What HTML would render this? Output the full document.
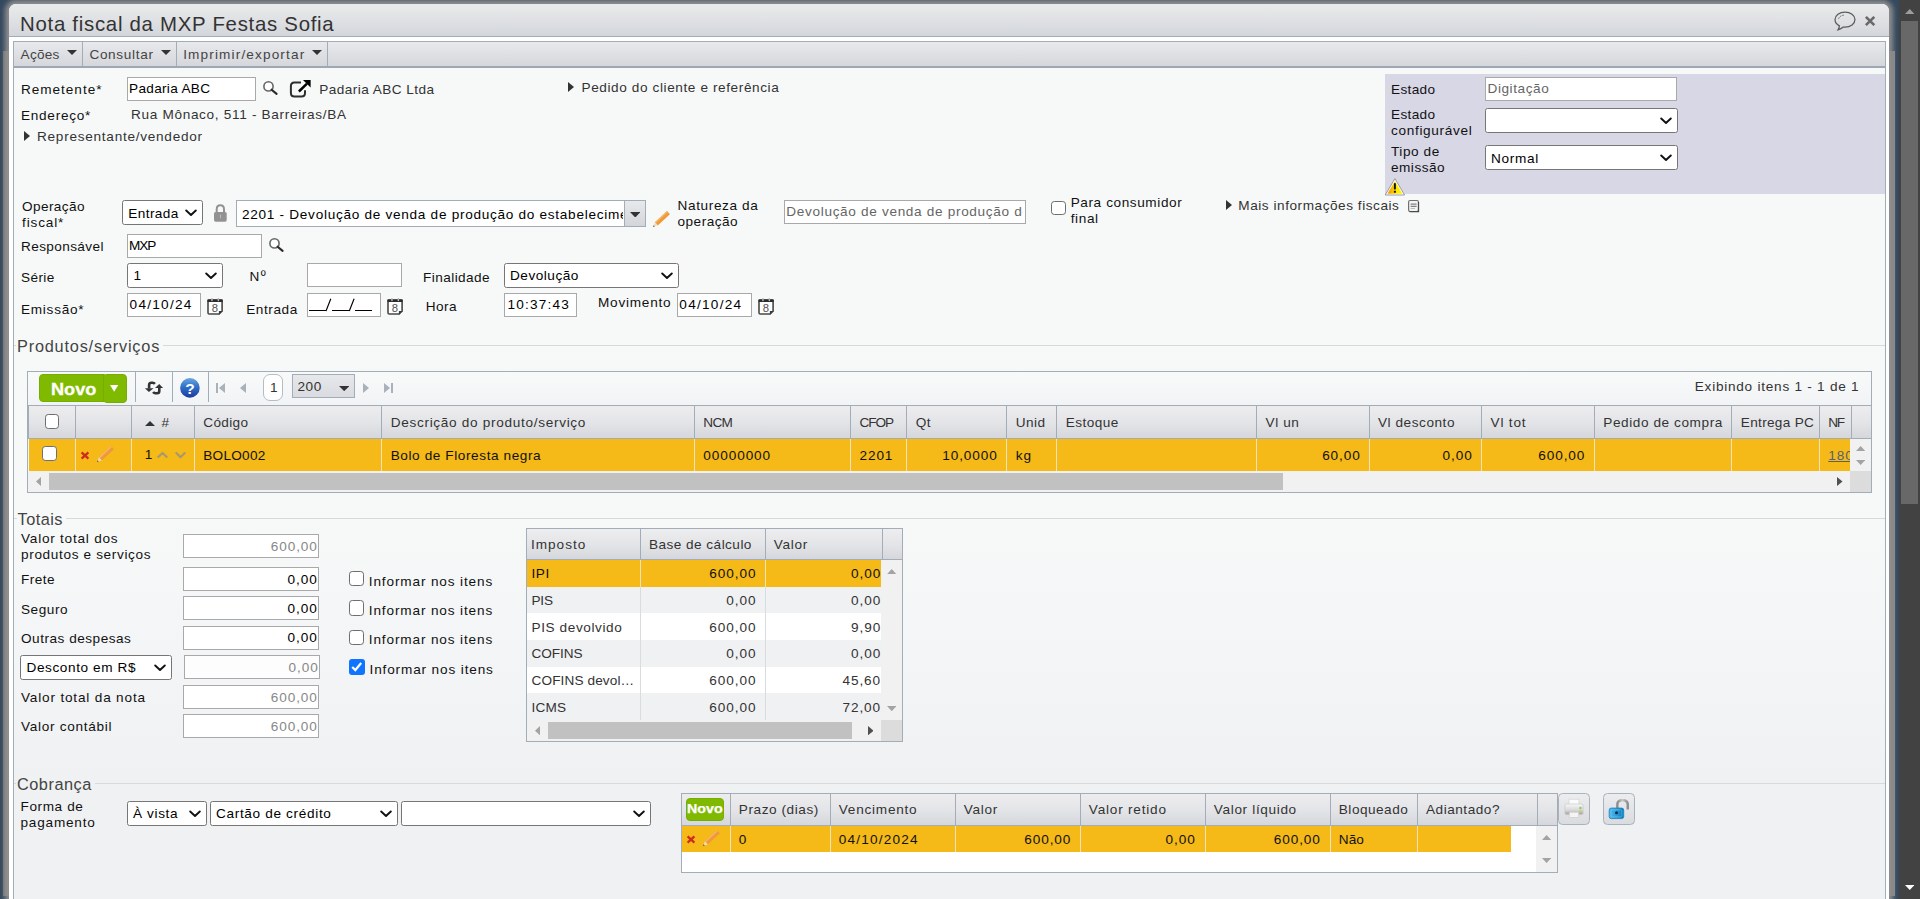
<!DOCTYPE html>
<html lang="pt-BR"><head><meta charset="utf-8"><title>Nota fiscal</title>
<style>
html,body{margin:0;padding:0;}
body{width:1920px;height:899px;overflow:hidden;position:relative;background:#34495e;font-family:"Liberation Sans",sans-serif;font-size:13.333px;color:#111;}
div,span,svg{position:absolute;box-sizing:border-box;}
.t{white-space:pre;line-height:16px;}
.sel{background:#fff;border:1px solid #767676;border-radius:2.5px;}

</style></head>
<body>
<div style="left:3px;top:51px;width:7px;height:845px;background:linear-gradient(90deg,#6e6e6e,#8c8c8c 60%,#9a9a9a);"></div>
<div style="left:1888px;top:51px;width:7px;height:845px;background:linear-gradient(90deg,#9a9a9a,#7c7c7c 45%,#8a8a8a);"></div>
<div style="left:9px;top:4px;width:1880px;height:900px;background:#fff;border-radius:7px 7px 0 0;box-shadow:0 0 5px 4px #8f8f8f;"></div>
<div style="left:9px;top:4px;width:1880px;height:33px;border-radius:7px 7px 0 0;background:linear-gradient(#e9eaec,#dfe1e4 50%,#d3d6db);border-bottom:1px solid #a3adb8;"></div>
<span class="t" style="top:12px;font-size:20.4px;line-height:24px;color:#333;letter-spacing:0.722px;left:20.00px;">Nota fiscal da MXP Festas Sofia</span>
<svg style="left:1834px;top:11px;" width="23" height="21" viewBox="0 0 23 21"><path d="M11 1.1 C5.5 1.1 1 4.5 1 8.6 C1 11.2 2.7 13.5 5.4 14.9 C5.3 16.3 4.8 17.6 4 18.8 C6.3 18.2 8 17.2 9.3 16 C9.9 16.1 10.4 16.1 11 16.1 C16.5 16.1 21 12.7 21 8.6 C21 4.5 16.5 1.1 11 1.1 Z" fill="none" stroke="#5c5c5c" stroke-width="1.25"/><path d="M4.5 7.8 C5.2 5.6 7.5 4.2 10.4 4" fill="none" stroke="#666" stroke-width="0.9" stroke-dasharray="1.7 0.9"/></svg>
<svg style="left:1864px;top:15px;" width="13" height="13" viewBox="0 0 13 13"><path d="M1.9 1.9 L10.3 10.1 M10.3 1.9 L1.9 10.1" stroke="#696969" stroke-width="2.7" stroke-linecap="butt"/></svg>
<div style="left:13px;top:41px;width:1873px;height:27px;background:linear-gradient(#e8e9ec,#dee0e3 50%,#d5d7dc);border:1px solid #a3adb8;border-bottom:2px solid #9ea8b3;"></div>
<div style="left:82px;top:42px;width:1px;height:24px;background:#a3adb8;"></div>
<div style="left:176px;top:42px;width:1px;height:24px;background:#a3adb8;"></div>
<div style="left:327px;top:42px;width:1px;height:24px;background:#a3adb8;"></div>
<span class="t" style="top:47px;font-size:13.6px;color:#444;letter-spacing:0.255px;left:20.60px;">Ações</span>
<svg style="left:67px;top:50px;" width="10" height="5" viewBox="0 0 10 5"><path d="M0 0 L10 0 L5.0 5 Z" fill="#333"/></svg>
<span class="t" style="top:47px;font-size:13.6px;color:#444;letter-spacing:0.677px;left:89.40px;">Consultar</span>
<svg style="left:161px;top:50px;" width="10" height="5" viewBox="0 0 10 5"><path d="M0 0 L10 0 L5.0 5 Z" fill="#333"/></svg>
<span class="t" style="top:47px;font-size:13.6px;color:#444;letter-spacing:1.142px;left:183.20px;">Imprimir/exportar</span>
<svg style="left:312px;top:50px;" width="10" height="5" viewBox="0 0 10 5"><path d="M0 0 L10 0 L5.0 5 Z" fill="#333"/></svg>
<div style="left:13px;top:68px;width:1873px;height:840px;background:linear-gradient(#f7f9f9 0,#f7f9f9 450px,#f0f1f3 710px,#f0f1f3 100%);border-left:1px solid #a3adb8;border-right:1px solid #a3adb8;"></div>
<div style="left:1899px;top:0px;width:21px;height:899px;background:#424242;"></div>
<div style="left:1901px;top:21px;width:17px;height:483px;background:#686868;"></div>
<svg style="left:1904.5px;top:9px;" width="9.5" height="5" viewBox="0 0 9.5 5"><path d="M0 5 L9.5 5 L4.75 0 Z" fill="#9d9d9d"/></svg>
<svg style="left:1904.5px;top:885px;" width="9.5" height="5" viewBox="0 0 9.5 5"><path d="M0 0 L9.5 0 L4.75 5 Z" fill="#fff"/></svg>
<span class="t" style="top:82px;font-size:13.6px;letter-spacing:0.962px;left:21.00px;">Remetente*</span>
<div style="left:127px;top:77px;width:129px;height:24px;background:#fff;border:1px solid #a9a9a9;"></div>
<span class="t" style="top:81px;font-size:13.6px;color:#000;letter-spacing:0.315px;left:129.00px;">Padaria ABC</span>
<svg style="left:262px;top:80px;" width="17" height="16" viewBox="0 0 17 16"><circle cx="6.5" cy="6.4" r="4.6" fill="#fff" stroke="#666" stroke-width="1.6"/><path d="M9.6 9.7 L14.6 13.9" stroke="#2a2a2a" stroke-width="2.1" stroke-linecap="round"/></svg>
<svg style="left:289px;top:79px;" width="23" height="20" viewBox="0 0 23 20"><path d="M12 3.4 L5.4 3.4 Q1.9 3.4 1.9 6.9 L1.9 14.1 Q1.9 17.6 5.4 17.6 L12.5 17.6 Q16 17.6 16 14.1 L16 11.2" fill="none" stroke="#2e2e2e" stroke-width="2"/><path d="M9.9 12.5 L18 4.6" stroke="#000" stroke-width="2.5"/><path d="M14 1.1 L21.6 1.1 L21.6 8.5 Z" fill="#000"/></svg>
<span class="t" style="top:82px;font-size:13.6px;color:#333;letter-spacing:0.441px;left:319.30px;">Padaria ABC Ltda</span>
<span class="t" style="top:108px;font-size:13.6px;letter-spacing:0.724px;left:21.00px;">Endereço*</span>
<span class="t" style="top:107px;font-size:13.6px;color:#333;letter-spacing:0.675px;left:131.00px;">Rua Mônaco, 511 - Barreiras/BA</span>
<svg style="left:24px;top:131px;" width="6" height="10" viewBox="0 0 6 10"><path d="M0 0 L6 5.0 L0 10 Z" fill="#333"/></svg>
<span class="t" style="top:129px;font-size:13.6px;color:#333;letter-spacing:0.735px;left:37.00px;">Representante/vendedor</span>
<svg style="left:568px;top:82px;" width="6" height="10" viewBox="0 0 6 10"><path d="M0 0 L6 5.0 L0 10 Z" fill="#333"/></svg>
<span class="t" style="top:80px;font-size:13.6px;color:#333;letter-spacing:0.601px;left:581.50px;">Pedido do cliente e referência</span>
<div style="left:1385px;top:74px;width:500px;height:120px;background:#d8d7e6;"></div>
<span class="t" style="top:82px;font-size:13.6px;letter-spacing:0.342px;left:1391.00px;">Estado</span>
<div style="left:1485px;top:77px;width:192px;height:24px;background:#fff;border:1px solid #a9a9a9;"></div>
<span class="t" style="top:81px;font-size:13.6px;color:#666;letter-spacing:0.567px;left:1487.50px;">Digitação</span>
<span class="t" style="top:107px;font-size:13.6px;letter-spacing:0.342px;left:1391.00px;">Estado</span>
<span class="t" style="top:123px;font-size:13.6px;letter-spacing:0.678px;left:1391.00px;">configurável</span>
<div class="sel" style="left:1485px;top:108px;width:193px;height:25px;"></div>
<svg style="left:1660px;top:117.0px;" width="12" height="8" viewBox="0 0 12 8"><path d="M1.2 1.5 L6 6 L10.8 1.5" fill="none" stroke="#111" stroke-width="1.9" stroke-linecap="round" stroke-linejoin="round"/></svg>
<span class="t" style="top:144px;font-size:13.6px;letter-spacing:0.561px;left:1391.00px;">Tipo de</span>
<span class="t" style="top:160px;font-size:13.6px;letter-spacing:0.491px;left:1391.00px;">emissão</span>
<div class="sel" style="left:1485px;top:145px;width:193px;height:25px;"></div>
<svg style="left:1660px;top:154.0px;" width="12" height="8" viewBox="0 0 12 8"><path d="M1.2 1.5 L6 6 L10.8 1.5" fill="none" stroke="#111" stroke-width="1.9" stroke-linecap="round" stroke-linejoin="round"/></svg>
<span class="t" style="top:151px;font-size:13.6px;color:#000;letter-spacing:0.717px;left:1491.00px;">Normal</span>
<svg style="left:1384px;top:177px;" width="22" height="20" viewBox="0 0 22 20"><defs><linearGradient id="wg" x1="0" x2="1" y1="0" y2="0"><stop offset="0.15" stop-color="#f0a400"/><stop offset="0.6" stop-color="#ffe600"/><stop offset="0.9" stop-color="#fff200"/></linearGradient></defs><path d="M10.9 1.6 L20.6 18 L1.2 18 Z" fill="#fff" stroke="#9a9a9a" stroke-width="1" stroke-linejoin="round"/><path d="M10.9 4.2 L18.4 16.8 L3.4 16.8 Z" fill="url(#wg)"/><path d="M10.9 6.2 L10.9 12.4" stroke="#111" stroke-width="1.9"/><rect x="9.9" y="13.8" width="2" height="1.9" fill="#111"/></svg>
<span class="t" style="top:199px;font-size:13.6px;letter-spacing:0.400px;left:22.00px;">Operação</span>
<span class="t" style="top:215px;font-size:13.6px;letter-spacing:0.853px;left:22.00px;">fiscal*</span>
<div class="sel" style="left:122px;top:200px;width:81px;height:25px;"></div>
<svg style="left:185px;top:209.0px;" width="12" height="8" viewBox="0 0 12 8"><path d="M1.2 1.5 L6 6 L10.8 1.5" fill="none" stroke="#111" stroke-width="1.9" stroke-linecap="round" stroke-linejoin="round"/></svg>
<span class="t" style="top:206px;font-size:13.6px;color:#000;letter-spacing:0.396px;left:128.30px;">Entrada</span>
<svg style="left:213px;top:204px;" width="15" height="18" viewBox="0 0 15 18"><path d="M3.7 9 L3.7 5.4 Q3.7 1.3 7.35 1.3 Q11 1.3 11 5.4 L11 9" fill="none" stroke="#929292" stroke-width="2"/><rect x="1" y="8" width="12.7" height="9.7" rx="1.6" fill="#929292"/><path d="M7.1 10.8 L7.9 10.8 L7.7 14.4 L7.3 14.4 Z" fill="#d8d8d8"/></svg>
<div style="left:236px;top:200px;width:410px;height:27px;background:#fff;border:1px solid #a3adb8;"></div>
<div style="left:624px;top:201px;width:21px;height:25px;background:linear-gradient(#e8e9ec,#d3d5da);border-left:1px solid #a3adb8;"></div>
<svg style="left:629.5px;top:211.5px;" width="10.5" height="5.5" viewBox="0 0 10.5 5.5"><path d="M0 0 L10.5 0 L5.25 5.5 Z" fill="#333"/></svg>
<div style="left:237px;top:201px;width:386px;height:25px;overflow:hidden"><span class="t" style="top:6px;font-size:13.6px;color:#000;letter-spacing:0.714px;left:5.00px;">2201 - Devolução de venda de produção do estabelecimento</span></div>
<svg style="left:650.9px;top:207.7px;" width="22" height="22" viewBox="0 0 22 22"><path d="M6.80 17.41 L18.90 6.17 L16.04 3.09 L3.94 14.33 Z" fill="#ee9a3a"/><path d="M3.94 14.33 L16.04 3.09 L16.85 3.97 L4.76 15.21 Z" fill="#f6b76e"/><path d="M2.29 18.73 L6.80 17.41 L3.94 14.33 Z" fill="#f7dcb0"/><path d="M2.00 19.00 L3.79 18.43 L2.70 17.26 Z" fill="#4a4a4a"/></svg>
<span class="t" style="top:198px;font-size:13.6px;letter-spacing:0.628px;left:677.50px;">Natureza da</span>
<span class="t" style="top:214px;font-size:13.6px;letter-spacing:0.488px;left:677.50px;">operação</span>
<div style="left:784px;top:200px;width:242px;height:24px;background:#fff;border:1px solid #a9a9a9;"></div>
<div style="left:785px;top:201px;width:238px;height:22px;overflow:hidden"><span class="t" style="top:3px;font-size:13.6px;color:#666;letter-spacing:0.672px;left:1.30px;">Devolução de venda de produção do estabelecimento</span></div>
<div style="left:1051.2px;top:200.8px;width:14.7px;height:14.7px;background:#fff;border:1.3px solid #6e6e6e;border-radius:3.3px;"></div>
<span class="t" style="top:195px;font-size:13.6px;letter-spacing:0.591px;left:1070.70px;">Para consumidor</span>
<span class="t" style="top:211px;font-size:13.6px;letter-spacing:0.629px;left:1070.70px;">final</span>
<svg style="left:1225.5px;top:199.5px;" width="6" height="10" viewBox="0 0 6 10"><path d="M0 0 L6 5.0 L0 10 Z" fill="#333"/></svg>
<span class="t" style="top:198px;font-size:13.6px;color:#333;letter-spacing:0.544px;left:1238.30px;">Mais informações fiscais</span>
<svg style="left:1407px;top:199px;" width="13" height="14" viewBox="0 0 13 14"><rect x="1.6" y="1.5" width="9.8" height="11" rx="1.4" fill="#f4f4f4" stroke="#707070" stroke-width="1.2"/><path d="M11.6 3 L11.6 12.6 L2.6 12.6" fill="none" stroke="#4a4a4a" stroke-width="1.1"/><path d="M3.6 5.1 L9.6 5.1 M3.6 7.3 L9.6 7.3" stroke="#666" stroke-width="1"/><path d="M3.6 9.5 L8 9.5" stroke="#bbb" stroke-width="1"/></svg>
<span class="t" style="top:239px;font-size:13.6px;letter-spacing:0.386px;left:21.00px;">Responsável</span>
<div style="left:127px;top:234px;width:135px;height:24px;background:#fff;border:1px solid #a9a9a9;"></div>
<span class="t" style="top:238px;font-size:13.6px;color:#000;letter-spacing:-1.028px;left:129.00px;">MXP</span>
<svg style="left:268.3px;top:237px;" width="17" height="16" viewBox="0 0 17 16"><circle cx="6.5" cy="6.4" r="4.6" fill="#fff" stroke="#666" stroke-width="1.6"/><path d="M9.6 9.7 L14.6 13.9" stroke="#2a2a2a" stroke-width="2.1" stroke-linecap="round"/></svg>
<span class="t" style="top:270px;font-size:13.6px;letter-spacing:0.406px;left:21.00px;">Série</span>
<div class="sel" style="left:127px;top:263px;width:96px;height:25px;"></div>
<svg style="left:205px;top:272.0px;" width="12" height="8" viewBox="0 0 12 8"><path d="M1.2 1.5 L6 6 L10.8 1.5" fill="none" stroke="#111" stroke-width="1.9" stroke-linecap="round" stroke-linejoin="round"/></svg>
<span class="t" style="top:268px;font-size:13.6px;color:#000;letter-spacing:0.000px;left:133.50px;">1</span>
<span class="t" style="top:269px;font-size:13.6px;letter-spacing:1.456px;left:249.50px;">Nº</span>
<div style="left:307px;top:263px;width:95px;height:24px;background:#fff;border:1px solid #a9a9a9;"></div>
<span class="t" style="top:270px;font-size:13.6px;letter-spacing:0.435px;left:423.00px;">Finalidade</span>
<div class="sel" style="left:504px;top:263px;width:175px;height:25px;"></div>
<svg style="left:661px;top:272.0px;" width="12" height="8" viewBox="0 0 12 8"><path d="M1.2 1.5 L6 6 L10.8 1.5" fill="none" stroke="#111" stroke-width="1.9" stroke-linecap="round" stroke-linejoin="round"/></svg>
<span class="t" style="top:268px;font-size:13.6px;color:#000;letter-spacing:0.515px;left:510.00px;">Devolução</span>
<span class="t" style="top:302px;font-size:13.6px;letter-spacing:0.730px;left:21.00px;">Emissão*</span>
<div style="left:127px;top:293px;width:74px;height:24px;background:#fff;border:1px solid #a9a9a9;"></div>
<span class="t" style="top:297px;font-size:13.6px;color:#000;letter-spacing:1.268px;left:129.60px;">04/10/24</span>
<svg style="left:207px;top:298px;" width="17" height="18" viewBox="0 0 17 18"><rect x="1" y="2.2" width="14.1" height="13.8" rx="1.2" fill="#fff" stroke="#484848" stroke-width="1.6"/><rect x="0.3" y="1.3" width="15.5" height="2.7" rx="0.8" fill="#2c2c2c"/><rect x="4.2" y="0" width="1.5" height="3.3" rx="0.7" fill="#b4b4b4"/><rect x="10.6" y="0" width="1.5" height="3.3" rx="0.7" fill="#b4b4b4"/><path d="M16.3 12.9 L16.3 17.3 L11.9 17.3 Z" fill="#f7f9f9"/><path d="M11.9 12.9 L15.9 12.9 L11.9 16.9 Z" fill="#3a3a3a"/><text x="8" y="13.9" font-size="11.3" text-anchor="middle" fill="#555" font-family="Liberation Sans">8</text></svg>
<span class="t" style="top:302px;font-size:13.6px;letter-spacing:0.587px;left:246.20px;">Entrada</span>
<div style="left:307px;top:293px;width:74px;height:24px;background:#fff;border:1px solid #a9a9a9;"></div>
<svg style="left:307px;top:293px;" width="74" height="24" viewBox="0 0 74 24"><path d="M2 17.5 H19 M25 17.5 H42.5 M48 17.5 H65" stroke="#000" stroke-width="1"/><path d="M19 18 L23.8 5.8 M42.3 18 L47.1 5.8" stroke="#000" stroke-width="1.15"/></svg>
<svg style="left:387.2px;top:298px;" width="17" height="18" viewBox="0 0 17 18"><rect x="1" y="2.2" width="14.1" height="13.8" rx="1.2" fill="#fff" stroke="#484848" stroke-width="1.6"/><rect x="0.3" y="1.3" width="15.5" height="2.7" rx="0.8" fill="#2c2c2c"/><rect x="4.2" y="0" width="1.5" height="3.3" rx="0.7" fill="#b4b4b4"/><rect x="10.6" y="0" width="1.5" height="3.3" rx="0.7" fill="#b4b4b4"/><path d="M16.3 12.9 L16.3 17.3 L11.9 17.3 Z" fill="#f7f9f9"/><path d="M11.9 12.9 L15.9 12.9 L11.9 16.9 Z" fill="#3a3a3a"/><text x="8" y="13.9" font-size="11.3" text-anchor="middle" fill="#555" font-family="Liberation Sans">8</text></svg>
<span class="t" style="top:299px;font-size:13.6px;letter-spacing:0.448px;left:425.70px;">Hora</span>
<div style="left:504px;top:293px;width:73px;height:24px;background:#fff;border:1px solid #a9a9a9;"></div>
<span class="t" style="top:297px;font-size:13.6px;color:#000;letter-spacing:1.197px;left:507.50px;">10:37:43</span>
<span class="t" style="top:295px;font-size:13.6px;letter-spacing:0.764px;left:598.00px;">Movimento</span>
<div style="left:677px;top:293px;width:75px;height:24px;background:#fff;border:1px solid #a9a9a9;"></div>
<span class="t" style="top:297px;font-size:13.6px;color:#000;letter-spacing:1.268px;left:679.30px;">04/10/24</span>
<svg style="left:758px;top:298px;" width="17" height="18" viewBox="0 0 17 18"><rect x="1" y="2.2" width="14.1" height="13.8" rx="1.2" fill="#fff" stroke="#484848" stroke-width="1.6"/><rect x="0.3" y="1.3" width="15.5" height="2.7" rx="0.8" fill="#2c2c2c"/><rect x="4.2" y="0" width="1.5" height="3.3" rx="0.7" fill="#b4b4b4"/><rect x="10.6" y="0" width="1.5" height="3.3" rx="0.7" fill="#b4b4b4"/><path d="M16.3 12.9 L16.3 17.3 L11.9 17.3 Z" fill="#f7f9f9"/><path d="M11.9 12.9 L15.9 12.9 L11.9 16.9 Z" fill="#3a3a3a"/><text x="8" y="13.9" font-size="11.3" text-anchor="middle" fill="#555" font-family="Liberation Sans">8</text></svg>
<div style="left:14px;top:345px;width:1871px;height:1px;background:#d6dadd;"></div>
<div style="left:16px;top:341px;width:147px;height:10px;background:#f7f9f9;"></div>
<span class="t" style="top:336px;font-size:16.32px;line-height:20px;color:#444;letter-spacing:0.790px;left:17.00px;">Produtos/serviços</span>
<div style="left:27px;top:371px;width:1845px;height:122px;background:#f7f9f9;border:1px solid #a3adb8;"></div>
<div style="left:28px;top:372px;width:1843px;height:33px;background:linear-gradient(#f8fafa,#f2f3f5);"></div>
<div style="left:39px;top:374px;width:66px;height:28px;background:#80ba00;border:1px solid #76ad00;border-radius:4px 0 0 4px;"></div>
<div style="left:102.5px;top:374px;width:24.5px;height:29px;background:#80ba00;border:1px solid #76ad00;border-radius:4px;"></div>
<div style="left:101px;top:375px;width:4px;height:26px;background:#80ba00;"></div>
<div style="left:102.5px;top:375px;width:1px;height:27px;background:#76ad00;"></div>
<span class="t" style="top:379px;font-size:16.32px;line-height:20px;color:#fff;font-weight:700;display:inline-block;transform-origin:0 0;transform:scaleX(1.1108);left:50.90px;-webkit-text-stroke:0.3px #fff;">Novo</span>
<svg style="left:110.3px;top:385.1px;" width="8.3" height="6.8" viewBox="0 0 8.3 6.8"><path d="M0 0 L8.3 0 L4.15 6.8 Z" fill="#fff"/></svg>
<div style="left:135px;top:372px;width:1px;height:30px;background:#a3adb8;"></div>
<div style="left:172px;top:372px;width:1px;height:30px;background:#a3adb8;"></div>
<div style="left:208px;top:372px;width:1px;height:30px;background:#a3adb8;"></div>
<svg style="left:144px;top:381px;" width="20" height="14" viewBox="0 0 20 14"><path d="M0.9 7.2 L9.6 7.2 L4.9 11.1 Z" fill="#333"/><path d="M5.1 7.4 L5.1 3.9 Q5.1 1.7 7.3 1.7 L8.6 1.7 Q10 1.7 10.9 2.9" fill="none" stroke="#333" stroke-width="2.6"/><path d="M11.1 6.9 L19.1 6.9 L15.2 2.9 Z" fill="#333"/><path d="M15.3 6.7 L15.3 10 Q15.3 12.2 13.1 12.2 L11.4 12.2 Q10 12.2 9.1 11" fill="none" stroke="#333" stroke-width="2.6"/></svg>
<svg style="left:180px;top:378px;" width="20" height="20" viewBox="0 0 20 20"><defs><linearGradient id="hg" x1="0" x2="0" y1="0" y2="1"><stop offset="0" stop-color="#6aa6e2"/><stop offset="0.45" stop-color="#3070c8"/><stop offset="1" stop-color="#1a3a9e"/></linearGradient></defs><circle cx="9.9" cy="9.9" r="9.8" fill="url(#hg)"/><text x="9.9" y="16" font-size="15.5" font-weight="700" text-anchor="middle" fill="#fff" font-family="Liberation Sans">?</text></svg>
<svg style="left:215.5px;top:383px;" width="9" height="10" viewBox="0 0 9 10"><rect x="0" y="0" width="2" height="10" fill="#a9b1bb"/><path d="M9 0 L3 5 L9 10 Z" fill="#a9b1bb"/></svg>
<svg style="left:240px;top:383px;" width="6" height="10" viewBox="0 0 6 10"><path d="M6 0 L0 5.0 L6 10 Z" fill="#a9b1bb"/></svg>
<div style="left:263px;top:374px;width:20px;height:27px;background:#fff;border:1px solid #b4bcc4;border-radius:7px;"></div>
<span class="t" style="top:380px;font-size:13.6px;color:#333;letter-spacing:0.000px;left:270.00px;">1</span>
<div style="left:292px;top:374px;width:63px;height:24px;background:linear-gradient(#e6e8ea,#d9dbe0);border:1px solid #a3adb8;"></div>
<span class="t" style="top:379px;font-size:13.6px;color:#333;letter-spacing:0.556px;left:297.50px;">200</span>
<svg style="left:338.8px;top:386.2px;" width="10.4" height="5.2" viewBox="0 0 10.4 5.2"><path d="M0 0 L10.4 0 L5.2 5.2 Z" fill="#333"/></svg>
<svg style="left:363px;top:383px;" width="6" height="10" viewBox="0 0 6 10"><path d="M0 0 L6 5.0 L0 10 Z" fill="#a9b1bb"/></svg>
<svg style="left:383.5px;top:383px;" width="9" height="10" viewBox="0 0 9 10"><rect x="7" y="0" width="2" height="10" fill="#a9b1bb"/><path d="M0 0 L6 5 L0 10 Z" fill="#a9b1bb"/></svg>
<span class="t" style="top:379px;font-size:13.6px;color:#333;letter-spacing:0.752px;left:1694.78px;">Exibindo itens 1 - 1 de 1</span>
<div style="left:28px;top:405px;width:1843px;height:34px;background:linear-gradient(#ededef,#e4e5e8 50%,#d5d7dc);border-top:1px solid #a3adb8;border-bottom:1px solid #a3adb8;"></div>
<div style="left:75px;top:406px;width:1px;height:32px;background:#a3adb8;"></div>
<div style="left:131px;top:406px;width:1px;height:32px;background:#a3adb8;"></div>
<div style="left:194px;top:406px;width:1px;height:32px;background:#a3adb8;"></div>
<div style="left:381px;top:406px;width:1px;height:32px;background:#a3adb8;"></div>
<div style="left:694px;top:406px;width:1px;height:32px;background:#a3adb8;"></div>
<div style="left:850px;top:406px;width:1px;height:32px;background:#a3adb8;"></div>
<div style="left:906px;top:406px;width:1px;height:32px;background:#a3adb8;"></div>
<div style="left:1006px;top:406px;width:1px;height:32px;background:#a3adb8;"></div>
<div style="left:1056px;top:406px;width:1px;height:32px;background:#a3adb8;"></div>
<div style="left:1256px;top:406px;width:1px;height:32px;background:#a3adb8;"></div>
<div style="left:1369px;top:406px;width:1px;height:32px;background:#a3adb8;"></div>
<div style="left:1481px;top:406px;width:1px;height:32px;background:#a3adb8;"></div>
<div style="left:1594px;top:406px;width:1px;height:32px;background:#a3adb8;"></div>
<div style="left:1731px;top:406px;width:1px;height:32px;background:#a3adb8;"></div>
<div style="left:1819px;top:406px;width:1px;height:32px;background:#a3adb8;"></div>
<div style="left:1851px;top:406px;width:1px;height:32px;background:#a3adb8;"></div>
<span class="t" style="top:415px;font-size:13.6px;color:#333;letter-spacing:0.000px;left:161.50px;">#</span>
<span class="t" style="top:415px;font-size:13.6px;color:#333;letter-spacing:0.336px;left:203.30px;">Código</span>
<span class="t" style="top:415px;font-size:13.6px;color:#333;letter-spacing:0.691px;left:390.70px;">Descrição do produto/serviço</span>
<span class="t" style="top:415px;font-size:13.6px;color:#333;letter-spacing:-0.725px;left:703.30px;">NCM</span>
<span class="t" style="top:415px;font-size:13.6px;color:#333;letter-spacing:-1.087px;left:859.50px;">CFOP</span>
<span class="t" style="top:415px;font-size:13.6px;color:#333;letter-spacing:0.387px;left:915.80px;">Qt</span>
<span class="t" style="top:415px;font-size:13.6px;color:#333;letter-spacing:0.397px;left:1015.80px;">Unid</span>
<span class="t" style="top:415px;font-size:13.6px;color:#333;letter-spacing:0.420px;left:1065.80px;">Estoque</span>
<span class="t" style="top:415px;font-size:13.6px;color:#333;letter-spacing:0.590px;left:1265.50px;">Vl un</span>
<span class="t" style="top:415px;font-size:13.6px;color:#333;letter-spacing:0.544px;left:1378.00px;">Vl desconto</span>
<span class="t" style="top:415px;font-size:13.6px;color:#333;letter-spacing:0.816px;left:1490.50px;">Vl tot</span>
<span class="t" style="top:415px;font-size:13.6px;color:#333;letter-spacing:0.578px;left:1603.30px;">Pedido de compra</span>
<span class="t" style="top:415px;font-size:13.6px;color:#333;letter-spacing:0.315px;left:1740.80px;">Entrega PC</span>
<span class="t" style="top:415px;font-size:13.6px;color:#333;letter-spacing:-1.485px;left:1828.30px;">NF</span>
<div style="left:44.8px;top:414px;width:14.7px;height:14.7px;background:#fff;border:1.3px solid #6e6e6e;border-radius:3.3px;"></div>
<svg style="left:145px;top:420.5px;" width="10" height="5" viewBox="0 0 10 5"><path d="M0 5 L10 5 L5.0 0 Z" fill="#333"/></svg>
<div style="left:29px;top:439px;width:1821px;height:32px;background:#f5b918;"></div>
<div style="left:28px;top:405px;width:1px;height:34px;background:#a3adb8;"></div>
<div style="left:75px;top:439px;width:1px;height:32px;background:#efe3c0;"></div>
<div style="left:131px;top:439px;width:1px;height:32px;background:#efe3c0;"></div>
<div style="left:194px;top:439px;width:1px;height:32px;background:#efe3c0;"></div>
<div style="left:381px;top:439px;width:1px;height:32px;background:#efe3c0;"></div>
<div style="left:694px;top:439px;width:1px;height:32px;background:#efe3c0;"></div>
<div style="left:850px;top:439px;width:1px;height:32px;background:#efe3c0;"></div>
<div style="left:906px;top:439px;width:1px;height:32px;background:#efe3c0;"></div>
<div style="left:1006px;top:439px;width:1px;height:32px;background:#efe3c0;"></div>
<div style="left:1056px;top:439px;width:1px;height:32px;background:#efe3c0;"></div>
<div style="left:1256px;top:439px;width:1px;height:32px;background:#efe3c0;"></div>
<div style="left:1369px;top:439px;width:1px;height:32px;background:#efe3c0;"></div>
<div style="left:1481px;top:439px;width:1px;height:32px;background:#efe3c0;"></div>
<div style="left:1594px;top:439px;width:1px;height:32px;background:#efe3c0;"></div>
<div style="left:1731px;top:439px;width:1px;height:32px;background:#efe3c0;"></div>
<div style="left:1819px;top:439px;width:1px;height:32px;background:#efe3c0;"></div>
<div style="left:42.2px;top:446px;width:14.7px;height:14.7px;background:#fff;border:1.3px solid #6e6e6e;border-radius:3.3px;"></div>
<svg style="left:80.0px;top:450.5px;" width="10" height="9" viewBox="0 0 10 9"><path d="M1.6 1.4 L8.4 7.6 M8.4 1.4 L1.6 7.6" stroke="#cf2a22" stroke-width="2.2" stroke-linecap="butt"/></svg>
<svg style="left:95.2px;top:442.8px;" width="22" height="22" viewBox="0 0 22 22"><path d="M6.80 17.41 L18.90 6.17 L16.04 3.09 L3.94 14.33 Z" fill="#ee9a3a"/><path d="M3.94 14.33 L16.04 3.09 L16.85 3.97 L4.76 15.21 Z" fill="#f6b76e"/><path d="M2.29 18.73 L6.80 17.41 L3.94 14.33 Z" fill="#f7dcb0"/><path d="M2.00 19.00 L3.79 18.43 L2.70 17.26 Z" fill="#4a4a4a"/></svg>
<span class="t" style="top:447px;font-size:13.6px;letter-spacing:0.000px;left:144.70px;">1</span>
<svg style="left:156.5px;top:451px;" width="11" height="8" viewBox="0 0 11 8"><path d="M1.3 5.9 L5.5 1.9 L9.7 5.9" fill="none" stroke="#a69870" stroke-width="2.1" stroke-linecap="round" stroke-linejoin="round"/></svg>
<svg style="left:174.5px;top:451px;" width="11" height="8" viewBox="0 0 11 8"><path d="M1.3 2.1 L5.5 6.3 L9.7 2.1" fill="none" stroke="#a69870" stroke-width="2.1" stroke-linecap="round" stroke-linejoin="round"/></svg>
<span class="t" style="top:448px;font-size:13.6px;letter-spacing:0.255px;left:203.30px;">BOLO002</span>
<span class="t" style="top:448px;font-size:13.6px;letter-spacing:0.593px;left:390.70px;">Bolo de Floresta negra</span>
<span class="t" style="top:448px;font-size:13.6px;letter-spacing:0.908px;left:703.30px;">00000000</span>
<span class="t" style="top:448px;font-size:13.6px;letter-spacing:0.890px;left:859.50px;">2201</span>
<span class="t" style="top:448px;font-size:13.6px;letter-spacing:0.932px;left:942.17px;">10,0000</span>
<span class="t" style="top:448px;font-size:13.6px;letter-spacing:0.840px;left:1015.80px;">kg</span>
<span class="t" style="top:448px;font-size:13.6px;letter-spacing:0.935px;left:1322.13px;">60,00</span>
<span class="t" style="top:448px;font-size:13.6px;letter-spacing:0.941px;left:1442.61px;">0,00</span>
<span class="t" style="top:448px;font-size:13.6px;letter-spacing:0.935px;left:1538.15px;">600,00</span>
<div style="left:1820px;top:440px;width:30px;height:30px;overflow:hidden"><span class="t" style="top:8px;font-size:13.6px;color:#566070;letter-spacing:0.876px;left:8.30px;text-decoration:underline;">180</span></div>
<div style="left:1850px;top:439px;width:21px;height:32px;background:#f1f1f1;"></div>
<svg style="left:1855.9px;top:445.9px;" width="9.3" height="5" viewBox="0 0 9.3 5"><path d="M0 5 L9.3 5 L4.65 0 Z" fill="#a3a3a3"/></svg>
<svg style="left:1855.9px;top:460.1px;" width="9.3" height="5" viewBox="0 0 9.3 5"><path d="M0 0 L9.3 0 L4.65 5 Z" fill="#a3a3a3"/></svg>
<div style="left:28px;top:471px;width:1822px;height:21px;background:#f1f1f1;"></div>
<div style="left:49px;top:473px;width:1233.5px;height:16.5px;background:#c1c1c1;"></div>
<svg style="left:36.3px;top:476.8px;" width="5" height="9" viewBox="0 0 5 9"><path d="M5 0 L0 4.5 L5 9 Z" fill="#a3a3a3"/></svg>
<svg style="left:1837px;top:476.8px;" width="5.5" height="9" viewBox="0 0 5.5 9"><path d="M0 0 L5.5 4.5 L0 9 Z" fill="#505050"/></svg>
<div style="left:1850px;top:471px;width:21px;height:21px;background:#dcdcdc;"></div>
<div style="left:14px;top:518px;width:1871px;height:1px;background:#d6dadd;"></div>
<div style="left:16.6px;top:514px;width:49.5px;height:10px;background:#f7f9f9;"></div>
<span class="t" style="top:509px;font-size:16.32px;line-height:20px;color:#444;letter-spacing:0.435px;left:17.60px;">Totais</span>
<span class="t" style="top:531px;font-size:13.6px;letter-spacing:0.763px;left:21.00px;">Valor total dos</span>
<span class="t" style="top:547px;font-size:13.6px;letter-spacing:0.650px;left:21.00px;">produtos e serviços</span>
<div style="left:183px;top:534px;width:136px;height:24px;background:#fff;border:1px solid #a9a9a9;"></div>
<span class="t" style="top:539px;font-size:13.6px;color:#888;letter-spacing:0.935px;left:270.65px;">600,00</span>
<span class="t" style="top:572px;font-size:13.6px;letter-spacing:0.443px;left:21.00px;">Frete</span>
<div style="left:183px;top:567px;width:136px;height:24px;background:#fff;border:1px solid #a9a9a9;"></div>
<span class="t" style="top:572px;font-size:13.6px;color:#000;letter-spacing:0.941px;left:287.61px;">0,00</span>
<span class="t" style="top:602px;font-size:13.6px;letter-spacing:0.551px;left:21.00px;">Seguro</span>
<div style="left:183px;top:596px;width:136px;height:24px;background:#fff;border:1px solid #a9a9a9;"></div>
<span class="t" style="top:601px;font-size:13.6px;color:#000;letter-spacing:0.941px;left:287.61px;">0,00</span>
<span class="t" style="top:631px;font-size:13.6px;letter-spacing:0.509px;left:21.00px;">Outras despesas</span>
<div style="left:183px;top:626px;width:136px;height:24px;background:#fff;border:1px solid #a9a9a9;"></div>
<span class="t" style="top:630px;font-size:13.6px;color:#000;letter-spacing:0.941px;left:287.61px;">0,00</span>
<div class="sel" style="left:20px;top:655px;width:152px;height:25px;"></div>
<svg style="left:154px;top:664.0px;" width="12" height="8" viewBox="0 0 12 8"><path d="M1.2 1.5 L6 6 L10.8 1.5" fill="none" stroke="#111" stroke-width="1.9" stroke-linecap="round" stroke-linejoin="round"/></svg>
<span class="t" style="top:660px;font-size:13.6px;color:#000;letter-spacing:0.600px;left:26.50px;">Desconto em R$</span>
<div style="left:184px;top:655px;width:136px;height:24px;background:#fdfdfd;border:1px solid #a9a9a9;"></div>
<span class="t" style="top:660px;font-size:13.6px;color:#888;letter-spacing:0.941px;left:288.61px;">0,00</span>
<span class="t" style="top:690px;font-size:13.6px;letter-spacing:0.817px;left:21.00px;">Valor total da nota</span>
<div style="left:183px;top:685px;width:136px;height:24px;background:#fff;border:1px solid #a9a9a9;"></div>
<span class="t" style="top:690px;font-size:13.6px;color:#888;letter-spacing:0.935px;left:270.65px;">600,00</span>
<span class="t" style="top:719px;font-size:13.6px;letter-spacing:0.713px;left:21.00px;">Valor contábil</span>
<div style="left:183px;top:714px;width:136px;height:24px;background:#fff;border:1px solid #a9a9a9;"></div>
<span class="t" style="top:719px;font-size:13.6px;color:#888;letter-spacing:0.935px;left:270.65px;">600,00</span>
<div style="left:348.6px;top:571px;width:15.3px;height:15.3px;background:#fff;border:1.3px solid #6e6e6e;border-radius:3.3px;"></div>
<span class="t" style="top:574px;font-size:13.6px;letter-spacing:0.859px;left:368.80px;">Informar nos itens</span>
<div style="left:348.6px;top:600.3px;width:15.3px;height:15.3px;background:#fff;border:1.3px solid #6e6e6e;border-radius:3.3px;"></div>
<span class="t" style="top:603px;font-size:13.6px;letter-spacing:0.859px;left:368.80px;">Informar nos itens</span>
<div style="left:348.6px;top:629.8px;width:15.3px;height:15.3px;background:#fff;border:1.3px solid #6e6e6e;border-radius:3.3px;"></div>
<span class="t" style="top:632px;font-size:13.6px;letter-spacing:0.859px;left:368.80px;">Informar nos itens</span>
<div style="left:349.3px;top:659.3px;width:15.3px;height:15.3px;background:#0f74ff;border-radius:3px;"></div>
<svg style="left:349.3px;top:659.3px;" width="15.3" height="15.3" viewBox="0 0 14.7 14.7"><path d="M3.1 7.6 L6.1 10.6 L11.7 3.9" fill="none" stroke="#fff" stroke-width="2.1" stroke-linecap="butt" stroke-linejoin="miter"/></svg>
<span class="t" style="top:662px;font-size:13.6px;letter-spacing:0.859px;left:369.50px;">Informar nos itens</span>
<div style="left:526px;top:528px;width:377px;height:214px;background:#fff;border:1px solid #a3adb8;"></div>
<div style="left:527px;top:528px;width:375px;height:32px;background:linear-gradient(#ededef,#e4e5e8 50%,#d5d7dc);border-top:1px solid #a3adb8;border-bottom:1px solid #a3adb8;"></div>
<div style="left:640px;top:529px;width:1px;height:30px;background:#a3adb8;"></div>
<div style="left:765px;top:529px;width:1px;height:30px;background:#a3adb8;"></div>
<div style="left:882px;top:529px;width:1px;height:30px;background:#a3adb8;"></div>
<span class="t" style="top:537px;font-size:13.6px;color:#333;letter-spacing:0.987px;left:531.00px;">Imposto</span>
<span class="t" style="top:537px;font-size:13.6px;color:#333;letter-spacing:0.461px;left:649.00px;">Base de cálculo</span>
<span class="t" style="top:537px;font-size:13.6px;color:#333;letter-spacing:0.710px;left:773.70px;">Valor</span>
<div style="left:527px;top:560px;width:354px;height:27.100000000000044px;background:#f5b918;"></div>
<span class="t" style="top:566px;font-size:13.6px;letter-spacing:0.588px;left:531.50px;">IPI</span>
<span class="t" style="top:566px;font-size:13.6px;letter-spacing:0.935px;left:709.35px;">600,00</span>
<span class="t" style="top:566px;font-size:13.6px;letter-spacing:0.941px;left:850.91px;">0,00</span>
<div style="left:527px;top:586.7px;width:354px;height:26.999999999999908px;background:#f0f1f3;"></div>
<span class="t" style="top:593px;font-size:13.6px;color:#333;letter-spacing:-0.211px;left:531.50px;">PIS</span>
<span class="t" style="top:593px;font-size:13.6px;color:#333;letter-spacing:0.941px;left:726.31px;">0,00</span>
<span class="t" style="top:593px;font-size:13.6px;color:#333;letter-spacing:0.941px;left:850.91px;">0,00</span>
<div style="left:527px;top:613.3px;width:354px;height:27.100000000000044px;background:#fff;"></div>
<span class="t" style="top:620px;font-size:13.6px;color:#333;letter-spacing:0.598px;left:531.50px;">PIS devolvido</span>
<span class="t" style="top:620px;font-size:13.6px;color:#333;letter-spacing:0.935px;left:709.35px;">600,00</span>
<span class="t" style="top:620px;font-size:13.6px;color:#333;letter-spacing:0.941px;left:850.91px;">9,90</span>
<div style="left:527px;top:640px;width:354px;height:27.100000000000044px;background:#f0f1f3;"></div>
<span class="t" style="top:646px;font-size:13.6px;color:#333;letter-spacing:-0.037px;left:531.50px;">COFINS</span>
<span class="t" style="top:646px;font-size:13.6px;color:#333;letter-spacing:0.941px;left:726.31px;">0,00</span>
<span class="t" style="top:646px;font-size:13.6px;color:#333;letter-spacing:0.941px;left:850.91px;">0,00</span>
<div style="left:527px;top:666.7px;width:354px;height:26.999999999999908px;background:#fff;"></div>
<span class="t" style="top:673px;font-size:13.6px;color:#333;letter-spacing:0.119px;left:531.50px;">COFINS devol…</span>
<span class="t" style="top:673px;font-size:13.6px;color:#333;letter-spacing:0.935px;left:709.35px;">600,00</span>
<span class="t" style="top:673px;font-size:13.6px;color:#333;letter-spacing:0.935px;left:842.43px;">45,60</span>
<div style="left:527px;top:693.3px;width:354px;height:26.700000000000045px;background:#f0f1f3;"></div>
<span class="t" style="top:700px;font-size:13.6px;color:#333;letter-spacing:0.172px;left:531.50px;">ICMS</span>
<span class="t" style="top:700px;font-size:13.6px;color:#333;letter-spacing:0.935px;left:709.35px;">600,00</span>
<span class="t" style="top:700px;font-size:13.6px;color:#333;letter-spacing:0.935px;left:842.43px;">72,00</span>
<div style="left:640px;top:560px;width:1px;height:160px;background:#d9dcdf;"></div>
<div style="left:640px;top:560px;width:1px;height:27px;background:#efe3c0;"></div>
<div style="left:765px;top:560px;width:1px;height:160px;background:#d9dcdf;"></div>
<div style="left:765px;top:560px;width:1px;height:27px;background:#efe3c0;"></div>
<div style="left:881px;top:560px;width:21px;height:160px;background:#f1f1f1;"></div>
<svg style="left:886.6px;top:569.3px;" width="9.5" height="5.2" viewBox="0 0 9.5 5.2"><path d="M0 5.2 L9.5 5.2 L4.75 0 Z" fill="#a3a3a3"/></svg>
<svg style="left:886.6px;top:705.8px;" width="9.5" height="5.2" viewBox="0 0 9.5 5.2"><path d="M0 0 L9.5 0 L4.75 5.2 Z" fill="#a3a3a3"/></svg>
<div style="left:527px;top:720px;width:354px;height:21px;background:#f1f1f1;"></div>
<div style="left:548px;top:722px;width:303.5px;height:16.5px;background:#c1c1c1;"></div>
<svg style="left:535px;top:725.8px;" width="5" height="9.3" viewBox="0 0 5 9.3"><path d="M5 0 L0 4.65 L5 9.3 Z" fill="#a3a3a3"/></svg>
<svg style="left:867.8px;top:725.8px;" width="5.6" height="9.3" viewBox="0 0 5.6 9.3"><path d="M0 0 L5.6 4.65 L0 9.3 Z" fill="#505050"/></svg>
<div style="left:881px;top:720px;width:21px;height:21px;background:#dcdcdc;"></div>
<div style="left:14px;top:783px;width:1871px;height:1px;background:#d6dadd;"></div>
<div style="left:16px;top:779px;width:79px;height:10px;background:#f0f1f3;"></div>
<span class="t" style="top:774px;font-size:16.32px;line-height:20px;color:#444;letter-spacing:0.509px;left:17.00px;">Cobrança</span>
<span class="t" style="top:799px;font-size:13.6px;letter-spacing:0.602px;left:20.50px;">Forma de</span>
<span class="t" style="top:815px;font-size:13.6px;letter-spacing:0.789px;left:20.50px;">pagamento</span>
<div class="sel" style="left:127px;top:801px;width:80px;height:25px;"></div>
<svg style="left:189px;top:810.0px;" width="12" height="8" viewBox="0 0 12 8"><path d="M1.2 1.5 L6 6 L10.8 1.5" fill="none" stroke="#111" stroke-width="1.9" stroke-linecap="round" stroke-linejoin="round"/></svg>
<span class="t" style="top:806px;font-size:13.6px;color:#000;letter-spacing:0.629px;left:133.00px;">À vista</span>
<div class="sel" style="left:210px;top:801px;width:188px;height:25px;"></div>
<svg style="left:380px;top:810.0px;" width="12" height="8" viewBox="0 0 12 8"><path d="M1.2 1.5 L6 6 L10.8 1.5" fill="none" stroke="#111" stroke-width="1.9" stroke-linecap="round" stroke-linejoin="round"/></svg>
<span class="t" style="top:806px;font-size:13.6px;color:#000;letter-spacing:0.664px;left:216.00px;">Cartão de crédito</span>
<div class="sel" style="left:401px;top:801px;width:250px;height:25px;"></div>
<svg style="left:633px;top:810.0px;" width="12" height="8" viewBox="0 0 12 8"><path d="M1.2 1.5 L6 6 L10.8 1.5" fill="none" stroke="#111" stroke-width="1.9" stroke-linecap="round" stroke-linejoin="round"/></svg>
<div style="left:681px;top:793px;width:877px;height:80px;background:#fff;border:1px solid #a3adb8;"></div>
<div style="left:682px;top:793px;width:875px;height:33px;background:linear-gradient(#ededef,#e4e5e8 50%,#d5d7dc);border-top:1px solid #a3adb8;border-bottom:1px solid #a3adb8;"></div>
<div style="left:730px;top:794px;width:1px;height:31px;background:#a3adb8;"></div>
<div style="left:830px;top:794px;width:1px;height:31px;background:#a3adb8;"></div>
<div style="left:955px;top:794px;width:1px;height:31px;background:#a3adb8;"></div>
<div style="left:1080px;top:794px;width:1px;height:31px;background:#a3adb8;"></div>
<div style="left:1205px;top:794px;width:1px;height:31px;background:#a3adb8;"></div>
<div style="left:1330px;top:794px;width:1px;height:31px;background:#a3adb8;"></div>
<div style="left:1417px;top:794px;width:1px;height:31px;background:#a3adb8;"></div>
<div style="left:1537px;top:794px;width:1px;height:31px;background:#a3adb8;"></div>
<span class="t" style="top:802px;font-size:13.6px;color:#333;letter-spacing:0.571px;left:738.80px;">Prazo (dias)</span>
<span class="t" style="top:802px;font-size:13.6px;color:#333;letter-spacing:0.752px;left:838.80px;">Vencimento</span>
<span class="t" style="top:802px;font-size:13.6px;color:#333;letter-spacing:0.710px;left:963.80px;">Valor</span>
<span class="t" style="top:802px;font-size:13.6px;color:#333;letter-spacing:0.791px;left:1088.80px;">Valor retido</span>
<span class="t" style="top:802px;font-size:13.6px;color:#333;letter-spacing:0.651px;left:1213.80px;">Valor líquido</span>
<span class="t" style="top:802px;font-size:13.6px;color:#333;letter-spacing:0.498px;left:1338.80px;">Bloqueado</span>
<span class="t" style="top:802px;font-size:13.6px;color:#333;letter-spacing:0.519px;left:1426.00px;">Adiantado?</span>
<div style="left:686px;top:798px;width:38px;height:23px;background:#80ba00;border:1px solid #76ad00;border-radius:4px;"></div>
<span class="t" style="top:801px;font-size:12.24px;color:#fff;font-weight:700;display:inline-block;transform-origin:0 0;transform:scaleX(1.1636);left:687.20px;-webkit-text-stroke:0.25px #fff;">Novo</span>
<div style="left:682px;top:826px;width:829px;height:26px;background:#f5b918;"></div>
<div style="left:730px;top:826px;width:1px;height:26px;background:#efe3c0;"></div>
<div style="left:830px;top:826px;width:1px;height:26px;background:#efe3c0;"></div>
<div style="left:955px;top:826px;width:1px;height:26px;background:#efe3c0;"></div>
<div style="left:1080px;top:826px;width:1px;height:26px;background:#efe3c0;"></div>
<div style="left:1205px;top:826px;width:1px;height:26px;background:#efe3c0;"></div>
<div style="left:1330px;top:826px;width:1px;height:26px;background:#efe3c0;"></div>
<div style="left:1417px;top:826px;width:1px;height:26px;background:#efe3c0;"></div>
<svg style="left:685.8px;top:835.0px;" width="10" height="9" viewBox="0 0 10 9"><path d="M1.6 1.4 L8.4 7.6 M8.4 1.4 L1.6 7.6" stroke="#cf2a22" stroke-width="2.2" stroke-linecap="butt"/></svg>
<svg style="left:701.1px;top:826.8px;" width="22" height="22" viewBox="0 0 22 22"><path d="M6.80 17.41 L18.90 6.17 L16.04 3.09 L3.94 14.33 Z" fill="#ee9a3a"/><path d="M3.94 14.33 L16.04 3.09 L16.85 3.97 L4.76 15.21 Z" fill="#f6b76e"/><path d="M2.29 18.73 L6.80 17.41 L3.94 14.33 Z" fill="#f7dcb0"/><path d="M2.00 19.00 L3.79 18.43 L2.70 17.26 Z" fill="#4a4a4a"/></svg>
<span class="t" style="top:832px;font-size:13.6px;letter-spacing:0.000px;left:738.80px;">0</span>
<span class="t" style="top:832px;font-size:13.6px;letter-spacing:1.184px;left:838.80px;">04/10/2024</span>
<span class="t" style="top:832px;font-size:13.6px;letter-spacing:0.935px;left:1024.15px;">600,00</span>
<span class="t" style="top:832px;font-size:13.6px;letter-spacing:0.941px;left:1165.61px;">0,00</span>
<span class="t" style="top:832px;font-size:13.6px;letter-spacing:0.935px;left:1273.65px;">600,00</span>
<span class="t" style="top:832px;font-size:13.6px;letter-spacing:0.071px;left:1338.80px;">Não</span>
<div style="left:1536px;top:826px;width:21px;height:46px;background:#f1f1f1;"></div>
<svg style="left:1541.9px;top:834.9px;" width="9.2" height="5" viewBox="0 0 9.2 5"><path d="M0 5 L9.2 5 L4.6 0 Z" fill="#a3a3a3"/></svg>
<svg style="left:1541.9px;top:858px;" width="9.2" height="5" viewBox="0 0 9.2 5"><path d="M0 0 L9.2 0 L4.6 5 Z" fill="#a3a3a3"/></svg>
<div style="left:1558.2px;top:793px;width:31.6px;height:31.8px;background:linear-gradient(#ecedef,#e3e4e7 50%,#d9dbdf);border:1px solid #a9b2bd;border-radius:4.5px;"></div>
<svg style="left:1564px;top:798px;" width="20" height="21" viewBox="0 0 20 21"><defs><linearGradient id="pg" x1="0" x2="0" y1="0" y2="1"><stop offset="0" stop-color="#fafafa"/><stop offset="0.6" stop-color="#d6d6d6"/><stop offset="1" stop-color="#9a9a9a"/></linearGradient></defs><g opacity="0.92"><rect x="5" y="1.2" width="10" height="5.5" fill="#fdfdfd" stroke="#d6d6d6" stroke-width="0.8"/><rect x="0.9" y="6" width="18.2" height="10.6" rx="1.6" fill="url(#pg)" stroke="#c6c6c6" stroke-width="0.7"/><rect x="5.4" y="14.2" width="9.2" height="5.3" rx="0.8" fill="#f6f6f6" stroke="#cfcfcf" stroke-width="0.8"/><circle cx="16.4" cy="10" r="1.2" fill="#6fd06a"/><circle cx="16.4" cy="13" r="1.1" fill="#e8c23a"/></g></svg>
<div style="left:1603.3px;top:793px;width:31.4px;height:31.8px;background:linear-gradient(#ecedef,#e3e4e7 50%,#d9dbdf);border:1px solid #a9b2bd;border-radius:4.5px;"></div>
<svg style="left:1607px;top:797px;" width="24" height="24" viewBox="0 0 24 24"><defs><linearGradient id="lg" x1="0" x2="1" y1="0" y2="0"><stop offset="0" stop-color="#56b8ec"/><stop offset="0.55" stop-color="#2a9ad6"/><stop offset="1" stop-color="#0a76b4"/></linearGradient><linearGradient id="sg" x1="0" x2="1" y1="0" y2="0"><stop offset="0" stop-color="#8c8c8c"/><stop offset="0.5" stop-color="#c8c8c8"/><stop offset="1" stop-color="#8c8c8c"/></linearGradient></defs><path d="M10.4 11.2 L10.4 7.6 Q10.4 3.3 15.5 3.3 Q20.7 3.3 20.7 7.6 L20.7 12.6" fill="none" stroke="url(#sg)" stroke-width="2.5"/><rect x="2.2" y="11.1" width="14.5" height="10.5" rx="2" fill="url(#lg)" stroke="#1c88c8" stroke-width="0.9"/><rect x="4" y="12.8" width="10.9" height="7.1" rx="1.5" fill="none" stroke="#7fcdf4" stroke-width="0.7" opacity="0.7"/><circle cx="9.5" cy="15.8" r="1.5" fill="#0b2a44"/></svg>
</body></html>
